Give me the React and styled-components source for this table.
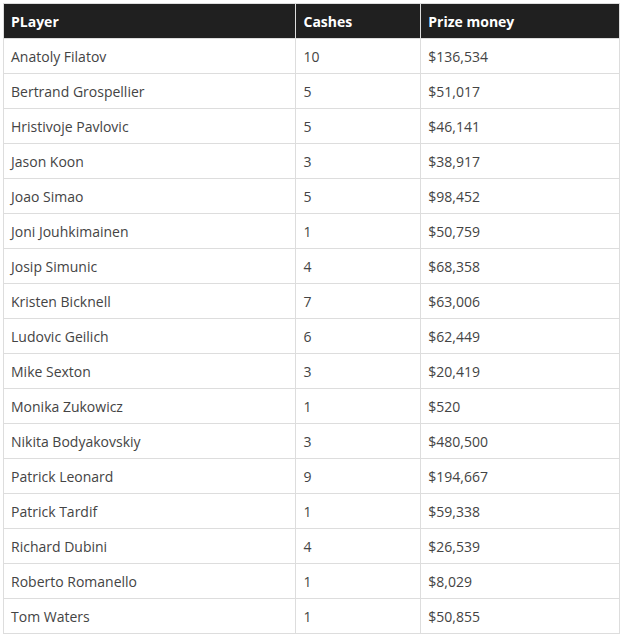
import React from "react";
import styled, { createGlobalStyle } from "styled-components";

const Global = createGlobalStyle`
  html, body { margin: 0; padding: 0; background: #fff; }
  body { font-family: "Open Sans", "Liberation Sans", sans-serif; }
`;

const Wrap = styled.div`
  padding: 3px 4px 0 3px;
`;

const Table = styled.table`
  width: 617px;
  border-collapse: collapse;
  font-family: "Open Sans", "Liberation Sans", sans-serif;
  font-size: 14px;
  color: #444;
`;

const Th = styled.th`
  background: #202020;
  color: #fff;
  font-weight: 700;
  text-align: left;
  height: 35px;
  padding: 0 7px;
  border: 1px solid #ddd;
  width: ${(p) => p.$w}px;
  box-sizing: border-box;
`;

const Td = styled.td`
  height: 34px;
  padding: 0 7px;
  border: 1px solid #ddd;
  vertical-align: middle;
`;

const rows = [
  ["Anatoly Filatov", "10", "$136,534"],
  ["Bertrand Grospellier", "5", "$51,017"],
  ["Hristivoje Pavlovic", "5", "$46,141"],
  ["Jason Koon", "3", "$38,917"],
  ["Joao Simao", "5", "$98,452"],
  ["Joni Jouhkimainen", "1", "$50,759"],
  ["Josip Simunic", "4", "$68,358"],
  ["Kristen Bicknell", "7", "$63,006"],
  ["Ludovic Geilich", "6", "$62,449"],
  ["Mike Sexton", "3", "$20,419"],
  ["Monika Zukowicz", "1", "$520"],
  ["Nikita Bodyakovskiy", "3", "$480,500"],
  ["Patrick Leonard", "9", "$194,667"],
  ["Patrick Tardif", "1", "$59,338"],
  ["Richard Dubini", "4", "$26,539"],
  ["Roberto Romanello", "1", "$8,029"],
  ["Tom Waters", "1", "$50,855"],
];

export default function App() {
  return (
    <Wrap>
      <Global />
      <Table>
        <thead>
          <tr>
            <Th $w={293}>PLayer</Th>
            <Th $w={125}>Cashes</Th>
            <Th $w={199}>Prize money</Th>
          </tr>
        </thead>
        <tbody>
          {rows.map((r) => (
            <tr key={r[0]}>
              <Td>{r[0]}</Td>
              <Td>{r[1]}</Td>
              <Td>{r[2]}</Td>
            </tr>
          ))}
        </tbody>
      </Table>
    </Wrap>
  );
}
